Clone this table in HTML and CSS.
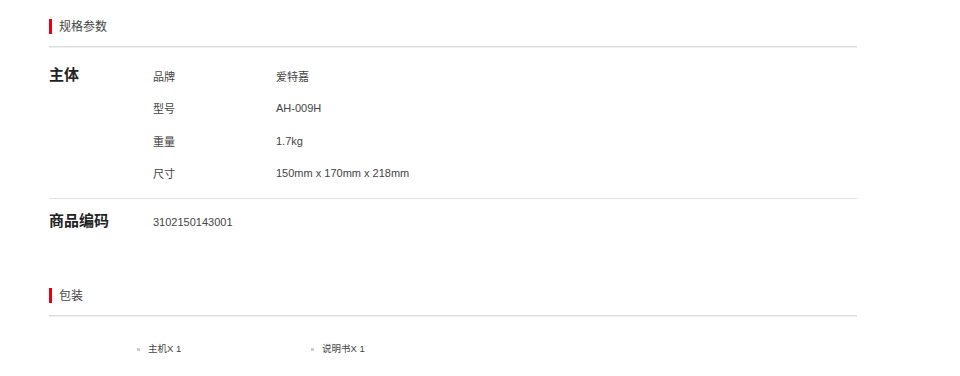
FILE: index.html
```html
<!DOCTYPE html>
<html lang="zh-CN">
<head>
<meta charset="utf-8">
<title>规格参数</title>
<link rel="stylesheet" href="styles.css">
</head>
<body>
<div class="page">
  <div class="sec-title"><span class="bar"></span><span class="sec-text">规格参数</span></div>
  <div class="group group-main">
    <div class="group-name">主体</div>
    <div class="rows">
      <div class="row"><span class="label">品牌</span><span class="value">爱特嘉</span></div>
      <div class="row"><span class="label">型号</span><span class="value">AH-009H</span></div>
      <div class="row"><span class="label">重量</span><span class="value">1.7kg</span></div>
      <div class="row"><span class="label">尺寸</span><span class="value">150mm x 170mm x 218mm</span></div>
    </div>
  </div>
  <div class="group group-code">
    <div class="group-name">商品编码</div>
    <div class="rows">
      <div class="row"><span class="label">3102150143001</span></div>
    </div>
  </div>
  <div class="sec-title"><span class="bar"></span><span class="sec-text">包装</span></div>
  <ul class="pack">
    <li class="pack-item">主机X 1</li>
    <li class="pack-item">说明书X 1</li>
  </ul>
</div>
</body>
</html>
```
FILE: styles.css
```css
html, body {
  margin: 0;
  padding: 0;
  background: #fff;
}
body {
  font-family: "Liberation Sans", Arial, "Noto Sans CJK SC", sans-serif;
  color: #333;
}
.page {
  width: 808px;
  margin-left: 49px;
  padding-top: 12px;
}
.sec-title {
  display: flex;
  align-items: flex-start;
  height: 33px;
  padding-bottom: 1px;
  border-bottom: 1px solid #dcdcdc;
  box-shadow: 0 1px 0 #eeeeee;
}
.bar {
  width: 3px;
  height: 15px;
  background: #e60012;
  margin-right: 7px;
  margin-top: 7px;
}
.sec-text {
  font-size: 12px;
  color: #444;
  line-height: 15px;
  margin-top: 8px;
}
.group {
  display: flex;
}
.group-main {
  padding-top: 13px;
  padding-bottom: 9px;
  border-bottom: 1px solid #e2e2e2;
}
.group-code {
  padding-top: 7px;
  height: 33px;
  margin-bottom: 42px;
}
.group-name {
  width: 104px;
  font-size: 15px;
  font-weight: bold;
  color: #222;
  line-height: 30px;
}
.rows {
  display: flex;
  flex-direction: column;
}
.row {
  display: flex;
  height: 32.33px;
  align-items: center;
  font-size: 11px;
}
.label {
  width: 123px;
  color: #444;
}
.value {
  color: #444;
}
.pack {
  list-style: none;
  margin: 0;
  padding: 26px 0 0 88px;
  display: flex;
}
.pack-item {
  width: 174px;
  display: flex;
  align-items: center;
  font-size: 9.5px;
  color: #444;
  line-height: 14px;
}
.pack-item::before {
  content: "";
  width: 3px;
  height: 3px;
  background: #ccc;
  margin-right: 8px;
}
```
